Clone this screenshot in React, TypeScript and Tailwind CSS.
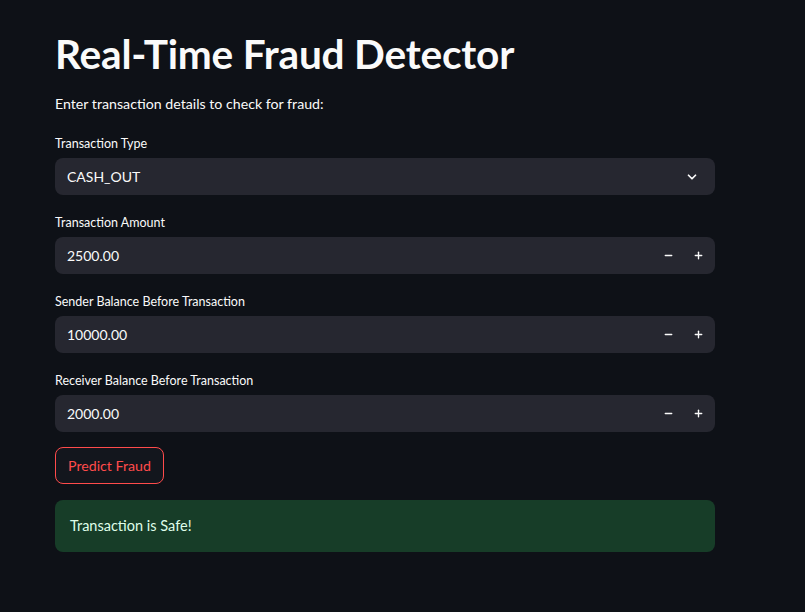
import { ChevronDown, Minus, Plus } from "lucide-react";

const fields = [
  { label: "Sender Balance Before Transaction", value: "10000.00" },
  { label: "Receiver Balance Before Transaction", value: "2000.00" },
];

function NumberInput({ label, value }: { label: string; value: string }) {
  return (
    <div className="flex flex-col">
      <label className="text-[12.5px] leading-none text-[#fafafa] h-[13px] mt-[2px] mb-[7px]">{label}</label>
      <div className="h-[37px] rounded-lg bg-[#262730] flex items-center pl-3 pr-[11px]">
        <span className="flex-1 text-[14px] text-[#fafafa]">{value}</span>
        <Minus size={11} strokeWidth={3} className="text-[#fafafa] mr-[19px]" />
        <Plus size={11} strokeWidth={3} className="text-[#fafafa]" />
      </div>
    </div>
  );
}

export default function App() {
  return (
    <div
      className="min-h-screen w-full bg-[#0e1117] text-[#fafafa]"
      style={{ fontFamily: "Lato, 'Noto Sans', sans-serif" }}
    >
      <div className="w-[660px] ml-[55px] pt-[32px] flex flex-col">
        <h1 className="text-[40.6px] font-bold leading-[44px] tracking-[-0.2px]">Real-Time Fraud Detector</h1>
        <p className="text-[14.2px] mt-[18px] leading-[20px]">Enter transaction details to check for fraud:</p>

        <div className="flex flex-col gap-[20px] mt-[22px]">
          <div className="flex flex-col">
            <label className="text-[12.5px] leading-none text-[#fafafa] h-[13px] mt-[2px] mb-[7px]">Transaction Type</label>
            <div className="h-[37px] rounded-lg bg-[#262730] flex items-center pl-3 pr-[16px]">
              <span className="flex-1 text-[14px]">CASH_OUT</span>
              <ChevronDown size={14} strokeWidth={3} className="text-[#fafafa]" />
            </div>
          </div>
          <NumberInput label="Transaction Amount" value="2500.00" />
          {fields.map((f) => (
            <NumberInput key={f.label} label={f.label} value={f.value} />
          ))}
        </div>

        <button className="mt-[15px] self-start h-[37px] px-[12px] rounded-lg border border-[#ff4b4b] text-[#ff4b4b] text-[14.2px] bg-[#13161d]">
          Predict Fraud
        </button>

        <div className="mt-[16px] h-[52px] rounded-lg bg-[#173d28] flex items-center px-[15px] text-[14.5px] text-[#dffde9]">
          Transaction is Safe!
        </div>
      </div>
    </div>
  );
}
